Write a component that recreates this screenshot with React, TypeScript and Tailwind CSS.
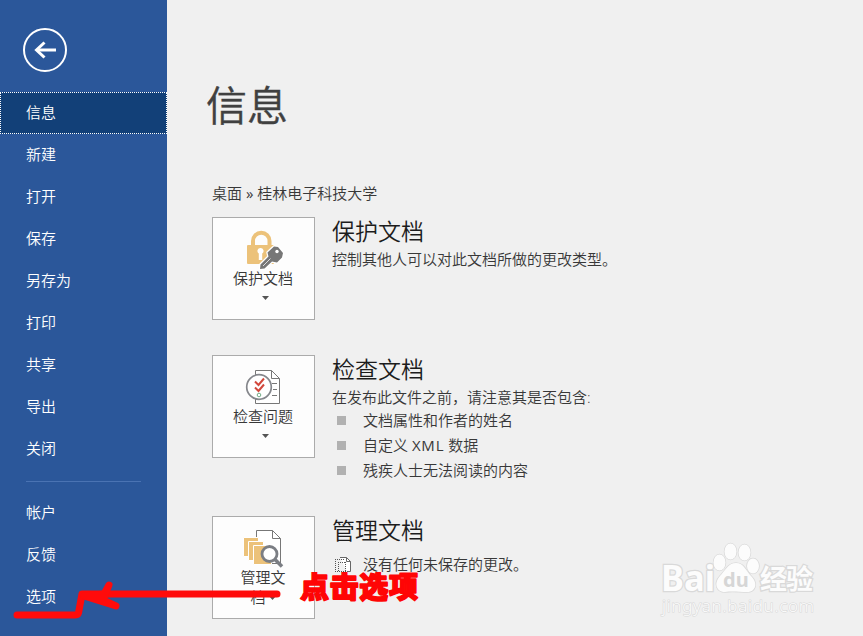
import type { ReactNode } from 'react';

const mainNav = ['信息', '新建', '打开', '保存', '另存为', '打印', '共享', '导出', '关闭'];
const footerNav = ['帐户', '反馈', '选项'];

export default function App() {
  return (
    <div className="relative flex h-[636px] w-[863px] overflow-hidden bg-[#f0f0f0] font-['Open_Sans','Noto_Sans_CJK_SC',sans-serif] text-[15px] font-[350] text-[#383838]">
      <Sidebar />

      <main className="flex-1 pl-[45px]">
        <h1 className="-ml-[6px] mt-[75px] h-[60px] text-[41px] font-[350] leading-[60px] text-[#404040] [-webkit-text-stroke:0.400px_#404040]">
          信息
        </h1>

        <p className="mt-[48px] h-[20px] leading-[20px]">
          桌面 <span className="font-normal">»</span> 桂林电子科技大学
        </p>

        <Section
          className="mt-[14px] h-[138px]"
          icon={<LockIcon />}
          label="保护文档"
          title="保护文档"
        >
          <p className="leading-[22px]">控制其他人可以对此文档所做的更改类型。</p>
        </Section>

        <Section
          className="h-[161px]"
          icon={<InspectIcon />}
          label="检查问题"
          title="检查文档"
        >
          <p className="leading-[22px]">在发布此文件之前，请注意其是否包含:</p>

          <ul>
            <Bullet>文档属性和作者的姓名</Bullet>
            <Bullet>
              自定义 <span className="font-normal tracking-[0.800px]">XML</span> 数据
            </Bullet>
            <Bullet>残疾人士无法阅读的内容</Bullet>
          </ul>
        </Section>

        <Section
          icon={<ManageIcon />}
          label="管理文档"
          title="管理文档"
          wrap
        >
          <p className="mt-[6px] flex items-center pl-[3px] leading-[22px]">
            <DraftIcon />
            没有任何未保存的更改。
          </p>
        </Section>
      </main>

      <Annotation />
      <Watermark />
    </div>
  );
}

function Sidebar() {
  return (
    <aside className="w-[167px] shrink-0 bg-[#2b579a] text-white">
      <div className="h-[92px] pl-[22px] pt-[27px]">
        <svg width="46" height="46" viewBox="0 0 46 46" fill="none" stroke="#fff">
          <circle cx="23" cy="23" r="21" strokeWidth="2" />
          <path d="M34 23H15" strokeWidth="3" />
          <path d="M22.500 15.500L14.500 23l8 7.500" strokeWidth="3" />
        </svg>
      </div>

      <nav>
        {mainNav.map((item, i) => (
          <NavItem key={item} label={item} active={i === 0} />
        ))}

        <div className="mx-[26px] mb-[10px] mt-[11px] h-px bg-[#4a73b3]" />

        {footerNav.map(item => (
          <NavItem key={item} label={item} />
        ))}
      </nav>
    </aside>
  );
}

function NavItem({ label, active = false }: { label: string; active?: boolean }) {
  return (
    <div
      className={
        active
          ? 'flex h-[42px] items-center border border-dotted border-white bg-[#124078] pb-[2px] pl-[25px]'
          : 'flex h-[42px] items-center pb-[2px] pl-[26px]'
      }
    >
      {label}
    </div>
  );
}

function Bullet({ children }: { children: ReactNode }) {
  return (
    <li className="flex h-[25px] items-center pl-[5px] leading-[25px]">
      <span className="mr-[17px] size-[9px] bg-[#b1b1b1]" />
      <span>{children}</span>
    </li>
  );
}

interface SectionProps {
  icon: ReactNode;
  label: string;
  title: string;
  wrap?: boolean;
  className?: string;
  children: ReactNode;
}

function Section({ icon, label, title, wrap, className, children }: SectionProps) {
  return (
    <section className={`flex items-start gap-[17px] ${className ?? ''}`}>
      <div className="flex h-[103px] w-[103px] shrink-0 flex-col items-center border border-[#ababab] bg-[#fdfdfd] pr-px pt-[12px]">
        {icon}

        {wrap ? (
          <p className="w-[50px] text-center leading-[20px]">
            {label.slice(0, 3)}
            <br />
            {label.slice(3)}
            <Caret className="ml-[3px] inline-block align-[3px]" />
          </p>
        ) : (
          <>
            <p className="h-[20px] leading-[20px]">{label}</p>
            <Caret className="ml-[4px] mt-[8px]" />
          </>
        )}
      </div>

      <div>
        <h2 className="-mt-px h-[32px] text-[23px] leading-[31px] text-[#1c1c1c]">{title}</h2>
        {children}
      </div>
    </section>
  );
}

function Caret({ className }: { className: string }) {
  return (
    <svg width="7" height="4" viewBox="0 0 7 4" className={className}>
      <path d="M0 0h7L3.500 4z" fill="#555" />
    </svg>
  );
}

function LockIcon() {
  return (
    <svg width="40" height="40" viewBox="0 0 40 40" className="mb-[-2px] ml-[6px] shrink-0">
      <path d="M7 17v-6a7.700 7.700 0 0 1 16.500 0v6" fill="none" stroke="#ecc27a" strokeWidth="4" />
      <rect x="1" y="15" width="27" height="19" rx="1" fill="#ecc27a" />
      <path d="M14.500 18a3 3 0 0 1 1.700 5.500V30h-3.400v-6.500a3 3 0 0 1 1.700-5.500z" fill="#fff" />
      <path
        d="M21.500 22.500l6.500-6 4 .5 5 6-1 4.500-5 5-5-1-7.500 7-4.500.5.500-4.500 8-8z"
        fill="#777"
        stroke="#fff"
        strokeWidth="2.500"
        strokeLinejoin="round"
        paintOrder="stroke"
      />
      <path d="M17 36l7.500-7.500" stroke="#ddd" strokeWidth="1" />
      <circle cx="31" cy="21.500" r="1.700" fill="#fff" />
    </svg>
  );
}

function InspectIcon() {
  return (
    <svg width="40" height="40" viewBox="0 0 40 40" fill="none" className="mb-[-2px] ml-[4px] shrink-0">
      <path d="M10.500 2.500h16l8 8v25h-24z" fill="#fff" stroke="#777" />
      <path d="M26.500 2.500v8h8M27 15.500h5M28 21.500h4M27 27.500h5" stroke="#777" />
      <circle cx="14" cy="19" r="12.300" fill="#fff" stroke="#85878c" strokeWidth="1.700" />
      <path d="M10 13.500l3.500 3.500 5.500-6.500M10 19.500l3.500 3.500 5.500-6.500" stroke="#d2483c" strokeWidth="2" />
      <circle cx="14" cy="27" r="1.800" stroke="#72ad88" />
    </svg>
  );
}

function ManageIcon() {
  return (
    <svg width="44" height="40" viewBox="0 0 44 40" fill="none" className="mb-[-2px] shrink-0">
      <path d="M15.500 8V1.500h16l8 8v25h-13" fill="#fff" stroke="#777" />
      <path d="M31.500 1.500v8h8" stroke="#777" />
      <g fill="#ecc27a" stroke="#fff">
        <path d="M2.500 8.500h15v19h-15z" />
        <path d="M7.500 12.500h15v19h-15z" />
        <path d="M12.500 16.500h18v19h-18z" />
      </g>
      <circle cx="28.500" cy="25" r="7.500" fill="#fff" stroke="#7b7e84" strokeWidth="2.800" />
      <path d="M34 30.500l7 7" stroke="#7b7e84" strokeWidth="3.500" />
    </svg>
  );
}

function DraftIcon() {
  return (
    <svg width="17" height="17" viewBox="0 0 17 17" fill="none" className="mr-[11px]">
      <path d="M5 1.500h6.500l4 4v10H12" fill="#fff" stroke="#666" />
      <path d="M11.500 1.500v4h4" stroke="#666" />
      <path d="M0 3.500h10M.5 5v11M3 6.500h8M3.500 8v8M10.500 6v10M0 15.500h11" stroke="#555" strokeDasharray="1 1" />
    </svg>
  );
}

// red marker strokes pointing at the options entry
function Annotation() {
  return (
    <svg
      width="430"
      height="60"
      viewBox="0 0 430 60"
      className="absolute left-0 top-[572px]"
      fill="none"
      stroke="#ff0b0b"
      strokeLinecap="round"
      strokeLinejoin="round"
    >
      <g strokeWidth="7">
        <path d="M277 22H82l-3.500 19q-.5 2-3 2H17" />
        <path d="M109 13l-5 9-20 2 32 10-13-6z" fill="#ff0b0b" />
      </g>
      <text
        x="300"
        y="26"
        fontSize="29"
        fontWeight="900"
        textLength="118"
        fill="#ff0505"
        stroke="#ff0505"
        strokeWidth="1.600"
        fontFamily="'Noto Sans CJK SC', sans-serif"
      >
        点击选项
      </text>
    </svg>
  );
}

function Watermark() {
  return (
    <svg
      width="170"
      height="84"
      viewBox="0 0 170 84"
      className="absolute left-[655px] top-[538px]"
      fill="#fcfcfc"
      stroke="#d9d9d9"
      paintOrder="stroke"
    >
      <g strokeWidth="2.500" fontWeight="700">
        <text
          x="6"
          y="53"
          fontSize="35"
          textLength="54"
          lengthAdjust="spacingAndGlyphs"
          fontFamily="'Noto Sans', sans-serif"
        >
          Bai
        </text>
        <text x="105" y="51" fontSize="27" textLength="53" fontFamily="'Noto Sans CJK SC', sans-serif">
          经验
        </text>
      </g>
      <g strokeWidth="1.500">
        <ellipse cx="64.500" cy="24.500" rx="6" ry="8" />
        <ellipse cx="75.500" cy="13.500" rx="6" ry="8" />
        <ellipse cx="89.500" cy="14.500" rx="6" ry="8" />
        <ellipse cx="98" cy="28" rx="6" ry="7.500" />
        <path d="M81 25c8 0 10 8 15 13 8 8 4 16-4 16-7 0-15-1-22 0-8 0-12-8-5-16 5-5 8-13 16-13z" />
      </g>
      <text
        x="68"
        y="49"
        fontSize="20"
        fontWeight="700"
        fill="#d6d6d6"
        stroke="none"
        fontFamily="'Noto Sans', sans-serif"
      >
        du
      </text>
      <text x="7" y="74" fontSize="17" textLength="152" strokeWidth="1.200" fontFamily="'Noto Sans', sans-serif">
        jingyan.baidu.com
      </text>
    </svg>
  );
}
